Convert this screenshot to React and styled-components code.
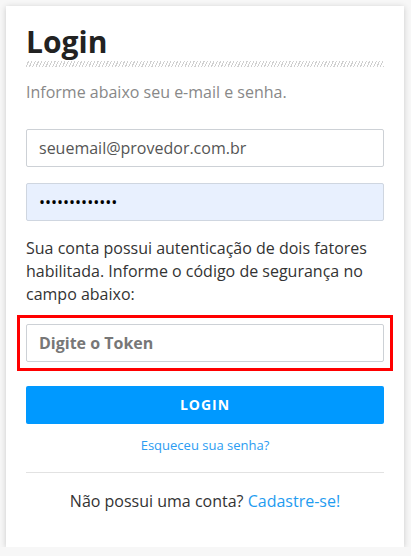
import React from "react";
import styled, { createGlobalStyle } from "styled-components";

const Global = createGlobalStyle`
  html, body { margin: 0; padding: 0; background: #f7f7f7; }
  body { font-family: "Open Sans", "Noto Sans", sans-serif; }
  * { box-sizing: border-box; }
`;

const Card = styled.div`
  width: 398px;
  margin: 6px 0 0 6px;
  background: #fff;
  box-shadow: 0 1px 6px rgba(0, 0, 0, 0.18);
  padding: 18px 20px 34px 20px;
  display: flex;
  flex-direction: column;
`;

const Title = styled.h1`
  margin: 0;
  font-size: 30px;
  line-height: 36px;
  font-weight: 700;
  color: #222;
`;

const Stripes = styled.div`
  margin-top: 1px;
  height: 6px;
  background: repeating-linear-gradient(
    -65deg,
    #d0d0d0 0 1px,
    transparent 1px 3px
  );
`;

const Subtitle = styled.p`
  margin: 14px 0 0;
  font-size: 16px;
  line-height: 22px;
  color: #888;
`;

const Input = styled.input`
  display: block;
  width: 100%;
  height: 38px;
  margin-top: ${(p) => p.$mt}px;
  padding: 0 12px;
  border: 1px solid ${(p) => (p.$filled ? "#cfd6e0" : "#cdd1d6")};
  border-radius: 2px;
  background: ${(p) => (p.$filled ? "#e8f0fe" : "#fff")};
  font-family: "Open Sans", sans-serif;
  font-size: 16px;
  color: ${(p) => (p.$filled ? "#000" : "#555")};
  outline: none;
  &::placeholder {
    color: #777;
    font-weight: 700;
  }
`;

const Info = styled.p`
  margin: 16px 0 0;
  font-size: 16px;
  line-height: 23px;
  color: #333;
`;

const TokenWrap = styled.div`
  margin-top: 18px;
  outline: 3px solid #f00;
  outline-offset: 6px;
  border-radius: 0;
`;

const Button = styled.button`
  margin-top: 24px;
  height: 38px;
  width: 100%;
  border: none;
  border-radius: 2px;
  background: #0099ff;
  color: #fff;
  font-family: "Open Sans", sans-serif;
  font-weight: 700;
  font-size: 14px;
  letter-spacing: 1px;
  line-height: 38px;
  padding: 0;
  cursor: pointer;
`;

const Forgot = styled.a`
  margin-top: 11px;
  align-self: center;
  font-size: 13px;
  line-height: 20px;
  color: #2b9cf2;
  text-decoration: none;
`;

const Rule = styled.hr`
  margin: 17px 0 0;
  border: none;
  border-top: 1px solid #e2e2e2;
  height: 0;
`;

const Signup = styled.p`
  margin: 16px 0 0;
  text-align: center;
  font-size: 16px;
  line-height: 24px;
  color: #333;
`;

const Link = styled.a`
  color: #1f9cf0;
  text-decoration: none;
`;

export default function App() {
  return (
    <>
      <Global />
      <Card>
        <Title>Login</Title>
        <Stripes />
        <Subtitle>Informe abaixo seu e-mail e senha.</Subtitle>
        <Input $mt={26} type="text" defaultValue="seuemail@provedor.com.br" />
        <Input $mt={16} $filled type="password" defaultValue="1234567890123" />
        <Info>
          Sua conta possui autenticação de dois fatores habilitada. Informe o
          código de segurança no campo abaixo:
        </Info>
        <TokenWrap>
          <Input $mt={0} type="text" placeholder="Digite o Token" />
        </TokenWrap>
        <Button>LOGIN</Button>
        <Forgot href="#">Esqueceu sua senha?</Forgot>
        <Rule />
        <Signup>
          Não possui uma conta? <Link href="#">Cadastre-se!</Link>
        </Signup>
      </Card>
    </>
  );
}
